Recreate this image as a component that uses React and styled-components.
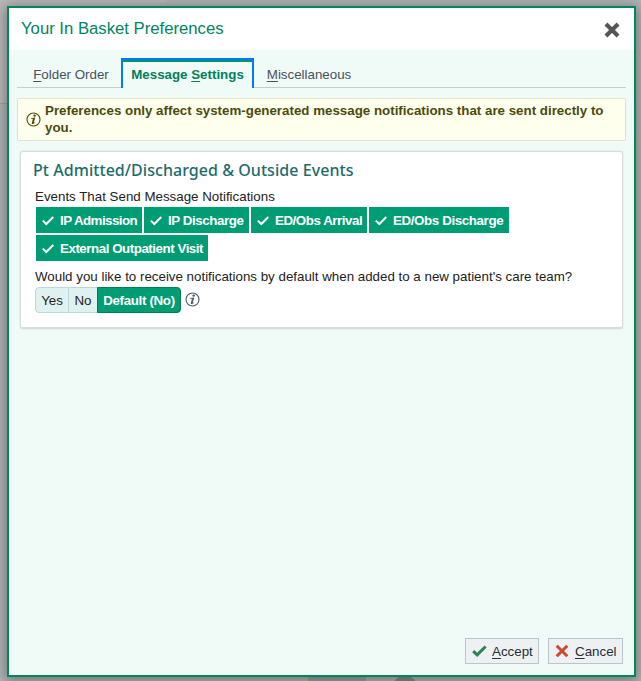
import React from "react";
import styled, { createGlobalStyle } from "styled-components";

const Global = createGlobalStyle`
  * { box-sizing: border-box; }
  html, body { margin: 0; overflow: hidden; }
  body { font: 13.333px/16px "Liberation Sans", Arial, sans-serif; color: #222; }
  button { font: inherit; color: inherit; margin: 0; }
`;

const Page = styled.div`
  height: 681px;
  padding: 6px 5px 4px 7px;
  overflow: hidden;
  background:
    radial-gradient(circle 13px at 405px 688px, #868b8c 12px, transparent 13px),
    linear-gradient(#9da1a3, #9da1a3) 308px 677px / 58px 4px no-repeat,
    linear-gradient(#a0a3a3, #a0a3a3) 0 103px / 7px 1px no-repeat,
    linear-gradient(#b9b9b9, #b9b9b9) 0 0 / 166px 103px no-repeat,
    #b1b6b5;
`;

const Dialog = styled.section`
  height: 671px;
  display: flex;
  flex-direction: column;
  border: 2px solid #00875f;
  background: #f0faf7;
  box-shadow: 0 2px 12px 2px rgba(0, 0, 0, 0.35);
`;

const Header = styled.header`
  height: 42px;
  flex: none;
  display: flex;
  align-items: flex-start;
  justify-content: space-between;
  padding: 11px 14px 0 12px;
  background: #fff;
`;

const Title = styled.h1`
  margin: 0;
  font-weight: 400;
  font-size: 16.7px;
  line-height: 20px;
  color: #00855f;
`;

const CloseButton = styled.button`
  display: flex;
  padding: 0;
  margin-top: 3px;
  border: 0;
  background: none;
  color: #555;
`;

const Tabs = styled.nav`
  display: flex;
  height: 30px;
  flex: none;
  margin: 8px 8px 0;
  border-bottom: 1px solid #c9cdcb;
`;

const Tab = styled.button`
  width: ${(p) => p.$width}px;
  height: ${(p) => (p.$active ? 30 : 29)}px;
  padding: ${(p) => (p.$active ? "7px 0 0" : "9px 0 0")};
  display: flex;
  justify-content: center;
  align-items: flex-start;
  white-space: pre;
  border: 0 solid #0078ff;
  border-width: ${(p) => (p.$active ? "2px 2px 0" : "0")};
  background: ${(p) => (p.$active ? "#f0faf7" : "transparent")};
  box-shadow: ${(p) => (p.$active ? "inset 0 2px #00966c" : "none")};
  color: ${(p) => (p.$active ? "#00805c" : "#47525d")};
  font-weight: ${(p) => (p.$active ? 700 : 400)};
`;

const TabLabel = styled.span`
  margin-left: ${(p) => p.$inset || 0}px;
`;

const Key = styled.span`
  text-decoration: underline;
  text-underline-offset: 2px;
  text-decoration-thickness: 1px;
`;

const Notice = styled.div`
  height: 43px;
  flex: none;
  display: flex;
  align-items: center;
  gap: 4px;
  margin: 10px 8px 0;
  padding: 0 8px 0 8px;
  border: 1px solid #e2e2cd;
  border-radius: 1px;
  background: #ffffee;
  color: #4c4b0b;
  font-weight: 700;
  line-height: 17px;
`;

const NoticeText = styled.p`
  margin: 0 -4px 2px 0;
`;

const Card = styled.article`
  width: 603px;
  height: 178px;
  flex: none;
  margin: 10px 0 0 11px;
  padding: 8px 14px 0 14px;
  border: 1px solid #d9dddb;
  border-width: 1px 1px 2px;
  border-radius: 3px;
  background: #fff;
  box-shadow: 0 0 2px rgba(0, 0, 0, 0.14);
`;

const CardTitle = styled.h2`
  margin: 0 0 0 -2px;
  font: 500 16px/20px "Noto Sans", sans-serif;
  letter-spacing: 0.05px;
  color: #1b6d6c;
`;

const Label = styled.p`
  margin: ${(p) => p.$top}px 0 0;
  white-space: nowrap;
`;

const Events = styled.div`
  display: flex;
  flex-wrap: wrap;
  gap: 2px;
  width: 500px;
  margin: 2px 0 0 1px;
`;

const EventButton = styled.button`
  display: flex;
  align-items: center;
  gap: 6px;
  width: ${(p) => p.$width}px;
  height: 26px;
  padding: 1px 0 0 6px;
  border: 0;
  background: #009c74;
  color: #fff;
  font-weight: 700;
  white-space: nowrap;
  letter-spacing: ${(p) => p.$spacing}px;
`;

const ChoiceRow = styled.div`
  display: flex;
  align-items: flex-start;
  gap: 4px;
  margin-top: 2px;
`;

const Choices = styled.div`
  display: flex;
`;

const Choice = styled.button`
  width: ${(p) => p.$width}px;
  height: 26px;
  padding: 2px 0 0;
  border: 1px solid ${(p) => (p.$active ? "#007d59" : "#b9d9df")};
  border-left-width: ${(p) => (p.$joined ? 0 : 1)}px;
  border-right-width: ${(p) => (p.$open ? 0 : 1)}px;
  border-radius: ${(p) => p.$radius || "0"};
  background: ${(p) => (p.$active ? "#009c74" : "#dff2ef")};
  color: ${(p) => (p.$active ? "#fff" : "#222")};
  font-weight: ${(p) => (p.$active ? 700 : 400)};
  letter-spacing: ${(p) => p.$spacing || 0}px;
  white-space: nowrap;
`;

const Footer = styled.footer`
  display: flex;
  justify-content: flex-end;
  gap: 9px;
  margin-top: auto;
  padding: 0 11px 11px 0;
`;

const ActionButton = styled.button`
  display: flex;
  align-items: center;
  gap: ${(p) => p.$gap}px;
  width: ${(p) => p.$width}px;
  height: 26px;
  padding: 1px 0 0 6px;
  border: 1px solid #bcc4cb;
  background: #edf1f4;
  color: #262e36;
`;

const Icon = styled.svg`
  display: block;
  flex: none;
`;

const InfoIcon = () => (
  <Icon width="15" height="15" viewBox="0 0 15 15">
    <circle cx="7.5" cy="7.5" r="6.5" fill="none" stroke="currentColor" strokeWidth="1.1" />
    <circle cx="8.6" cy="3.6" r="1.2" fill="currentColor" />
    <path d="M5.2 6 9.2 5.5 7.8 10.7Q7.8 11.1 9.2 10.2L9 11Q6.3 12.8 5.7 11.4L6.9 6.7H5.1Z" fill="currentColor" />
  </Icon>
);

const CheckIcon = () => (
  <Icon width="12" height="10" viewBox="0 0 12 10">
    <path d="M.8 4.6 4.3 8 11.3 1" fill="none" stroke="currentColor" strokeWidth="2" />
  </Icon>
);

const CrossIcon = ({ size, width }) => (
  <Icon width={size} height={size} viewBox="0 0 14 14">
    <path d="M1.7 1.7 12.3 12.3M12.3 1.7 1.7 12.3" stroke="currentColor" strokeWidth={width} />
  </Icon>
);

const Accent = styled.span`
  display: flex;
  margin: ${(p) => p.$margin || 0};
  color: ${(p) => p.$color};
`;

const events = [
  ["IP Admission", 106, -0.55],
  ["IP Discharge", 105, -0.42],
  ["ED/Obs Arrival", 116, -0.45],
  ["ED/Obs Discharge", 140, -0.38],
  ["External Outpatient Visit", 172, -0.46],
];

export default function App() {
  return (
    <>
      <Global />
      <Page>
        <Dialog>
          <Header>
            <Title>Your In Basket Preferences</Title>
            <CloseButton aria-label="Close">
              <CrossIcon size={16} width={3.6} />
            </CloseButton>
          </Header>
          <Tabs>
            <Tab $width={104}><TabLabel $inset={4}><Key>F</Key>older Order</TabLabel></Tab>
            <Tab $active $width={133}><TabLabel>Message <Key>S</Key>ettings</TabLabel></Tab>
            <Tab $width={110}><TabLabel><Key>M</Key>iscellaneous</TabLabel></Tab>
          </Tabs>
          <Notice>
            <InfoIcon />
            <NoticeText>
              Preferences only affect system-generated message notifications that are sent directly to you.
            </NoticeText>
          </Notice>
          <Card>
            <CardTitle>Pt Admitted/Discharged &amp; Outside Events</CardTitle>
            <Label $top={9}>Events That Send Message Notifications</Label>
            <Events>
              {events.map(([name, width, spacing]) => (
                <EventButton key={name} $width={width} $spacing={spacing}><CheckIcon />{name}</EventButton>
              ))}
            </Events>
            <Label $top={8}>
              Would you like to receive notifications by default when added to a new patient's care team?
            </Label>
            <ChoiceRow>
              <Choices>
                <Choice $width={34} $radius="4px 0 0 4px">Yes</Choice>
                <Choice $width={28} $joined $open>No</Choice>
                <Choice $width={84} $active $spacing={-0.33} $radius="0 4px 4px 0">Default (No)</Choice>
              </Choices>
              <Accent $color="#4b5a6b" $margin="5px 0 0"><InfoIcon /></Accent>
            </ChoiceRow>
          </Card>
          <Footer>
            <ActionButton $width={74} $gap={5}>
              <Accent $color="#2a8454">
                <Icon width="15" height="13" viewBox="0 0 15 13">
                  <path d="M1.2 6.1 5.2 9.9 13.6 1.5" fill="none" stroke="currentColor" strokeWidth="3" />
                </Icon>
              </Accent>
              <span><Key>A</Key>ccept</span>
            </ActionButton>
            <ActionButton $width={75} $gap={6}>
              <Accent $color="#c94a2c" $margin="0 0 2px"><CrossIcon size={14} width={3} /></Accent>
              <span><Key>C</Key>ancel</span>
            </ActionButton>
          </Footer>
        </Dialog>
      </Page>
    </>
  );
}
